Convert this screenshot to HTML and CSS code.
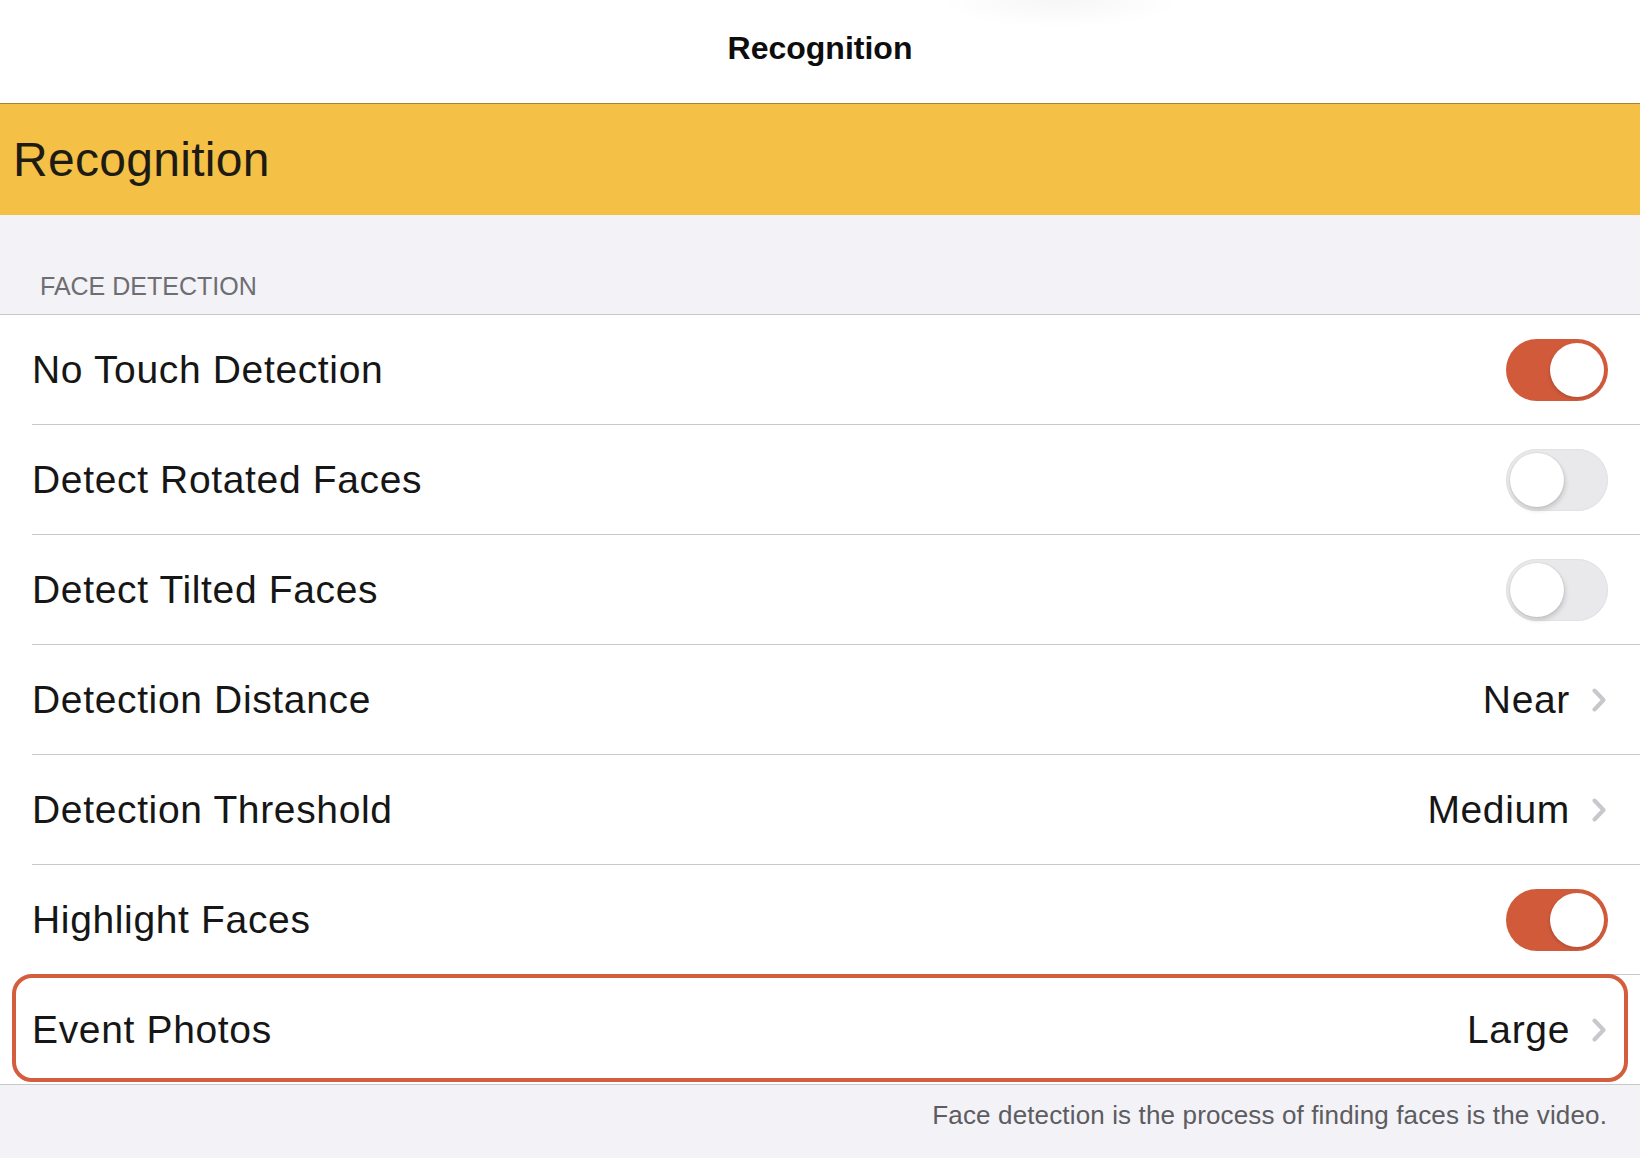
FILE: index.html
```html
<!DOCTYPE html>
<html lang="en">
<head>
  <meta charset="UTF-8" />
  <meta name="viewport" content="width=device-width, initial-scale=1.0"/>
  <title>Recognition</title>
  <link rel="stylesheet" href="styles.css">
</head>
<body>
  <div class="navbar">Recognition</div>
  <div class="banner">Recognition</div>

  <div class="section-header">FACE DETECTION</div>

  <div class="list">
    <div class="row">
      <div class="row-inner">
        <span class="label">No Touch Detection</span>
        <span class="switch on"><span class="knob"></span></span>
      </div>
    </div>
    <div class="row">
      <div class="row-inner">
        <span class="label">Detect Rotated Faces</span>
        <span class="switch"><span class="knob"></span></span>
      </div>
    </div>
    <div class="row">
      <div class="row-inner">
        <span class="label">Detect Tilted Faces</span>
        <span class="switch"><span class="knob"></span></span>
      </div>
    </div>
    <div class="row">
      <div class="row-inner">
        <span class="label">Detection Distance</span>
        <span class="detail">
          <span class="value">Near</span>
          <svg class="chevron" width="14" height="24" viewBox="0 0 14 24"><polyline points="2.5,2.5 11.5,12 2.5,21.5" /></svg>
        </span>
      </div>
    </div>
    <div class="row">
      <div class="row-inner">
        <span class="label">Detection Threshold</span>
        <span class="detail">
          <span class="value">Medium</span>
          <svg class="chevron" width="14" height="24" viewBox="0 0 14 24"><polyline points="2.5,2.5 11.5,12 2.5,21.5" /></svg>
        </span>
      </div>
    </div>
    <div class="row">
      <div class="row-inner">
        <span class="label">Highlight Faces</span>
        <span class="switch on"><span class="knob"></span></span>
      </div>
    </div>
    <div class="row selected">
      <div class="row-inner">
        <span class="label">Event Photos</span>
        <span class="detail">
          <span class="value">Large</span>
          <svg class="chevron" width="14" height="24" viewBox="0 0 14 24"><polyline points="2.5,2.5 11.5,12 2.5,21.5" /></svg>
        </span>
      </div>
    </div>
  </div>

  <div class="footer">Face detection is the process of finding faces is the video.</div>
</body>
</html>
```

FILE: styles.css
```css
body {
  margin: 0;
  font-family: 'Liberation Sans', Arial, sans-serif;
  background: #f2f2f7;
  color: #161616;
  display: flex;
  flex-direction: column;
  min-height: 100vh;
}
.navbar {
  height: 104px;
  border-bottom: 1px solid #a08536;
  background: radial-gradient(ellipse 120px 28px at 1060px 0, rgba(0,0,0,0.035), rgba(0,0,0,0)) , #fff;
  display: flex;
  align-items: center;
  justify-content: center;
  font-size: 32px;
  font-weight: bold;
  color: #0d0d0d;
  padding-bottom: 6px;
  box-sizing: border-box;
}
.banner {
  height: 111px;
  background: #f4c046;
  display: flex;
  align-items: center;
  padding-left: 13px;
  font-size: 48px;
  letter-spacing: 0.3px;
  color: #1e1b14;
}
.section-header {
  height: 99px;
  box-sizing: border-box;
  display: flex;
  align-items: flex-end;
  padding: 0 0 13px 40px;
  font-size: 25px;
  line-height: 30px;
  color: #6d6d72;
}
.list {
  background: #fff;
  border-top: 1px solid #c8c7cc;
  border-bottom: 1px solid #c8c7cc;
}
.row {
  position: relative;
  height: 110px;
  padding-left: 32px;
  display: flex;
}
.row:last-child { height: 109px; }
.row-inner {
  flex: 1;
  display: flex;
  align-items: center;
  justify-content: space-between;
  padding-right: 32px;
  border-bottom: 1px solid #c8c7cc;
}
.row:last-child .row-inner { border-bottom: none; }
.label, .value {
  font-size: 39px;
  letter-spacing: 0.65px;
}
.detail {
  display: flex;
  align-items: center;
  gap: 22px;
  margin-right: 2px;
}
.chevron polyline {
  fill: none;
  stroke: #c7c7cc;
  stroke-width: 4;
  stroke-linecap: round;
  stroke-linejoin: round;
}
.switch {
  position: relative;
  width: 102px;
  height: 62px;
  border-radius: 31px;
  background: #e9e9eb;
  box-shadow: inset 0 0 0 1px #e2e2e4;
}
.switch .knob {
  position: absolute;
  top: 4px;
  left: 4px;
  width: 54px;
  height: 54px;
  border-radius: 50%;
  background: #fff;
  box-shadow: 1px 3px 5px rgba(0,0,0,0.16), 0 0 0 1px rgba(0,0,0,0.04);
}
.switch.on {
  background: #d15a3b;
  box-shadow: none;
}
.switch.on .knob {
  left: auto;
  right: 4px;
  box-shadow: -1px 2px 3px rgba(0,0,0,0.12);
}
/* outline around the current row */
.row.selected::after {
  content: "";
  position: absolute;
  left: 12px;
  right: 12px;
  top: -1px;
  bottom: 2px;
  border: 4px solid #d45d3e;
  border-radius: 20px;
  pointer-events: none;
}
.footer {
  padding: 15px 33px 0 0;
  text-align: right;
  font-size: 26px;
  line-height: 30px;
  letter-spacing: 0.14px;
  color: #5c5c61;
}
```
